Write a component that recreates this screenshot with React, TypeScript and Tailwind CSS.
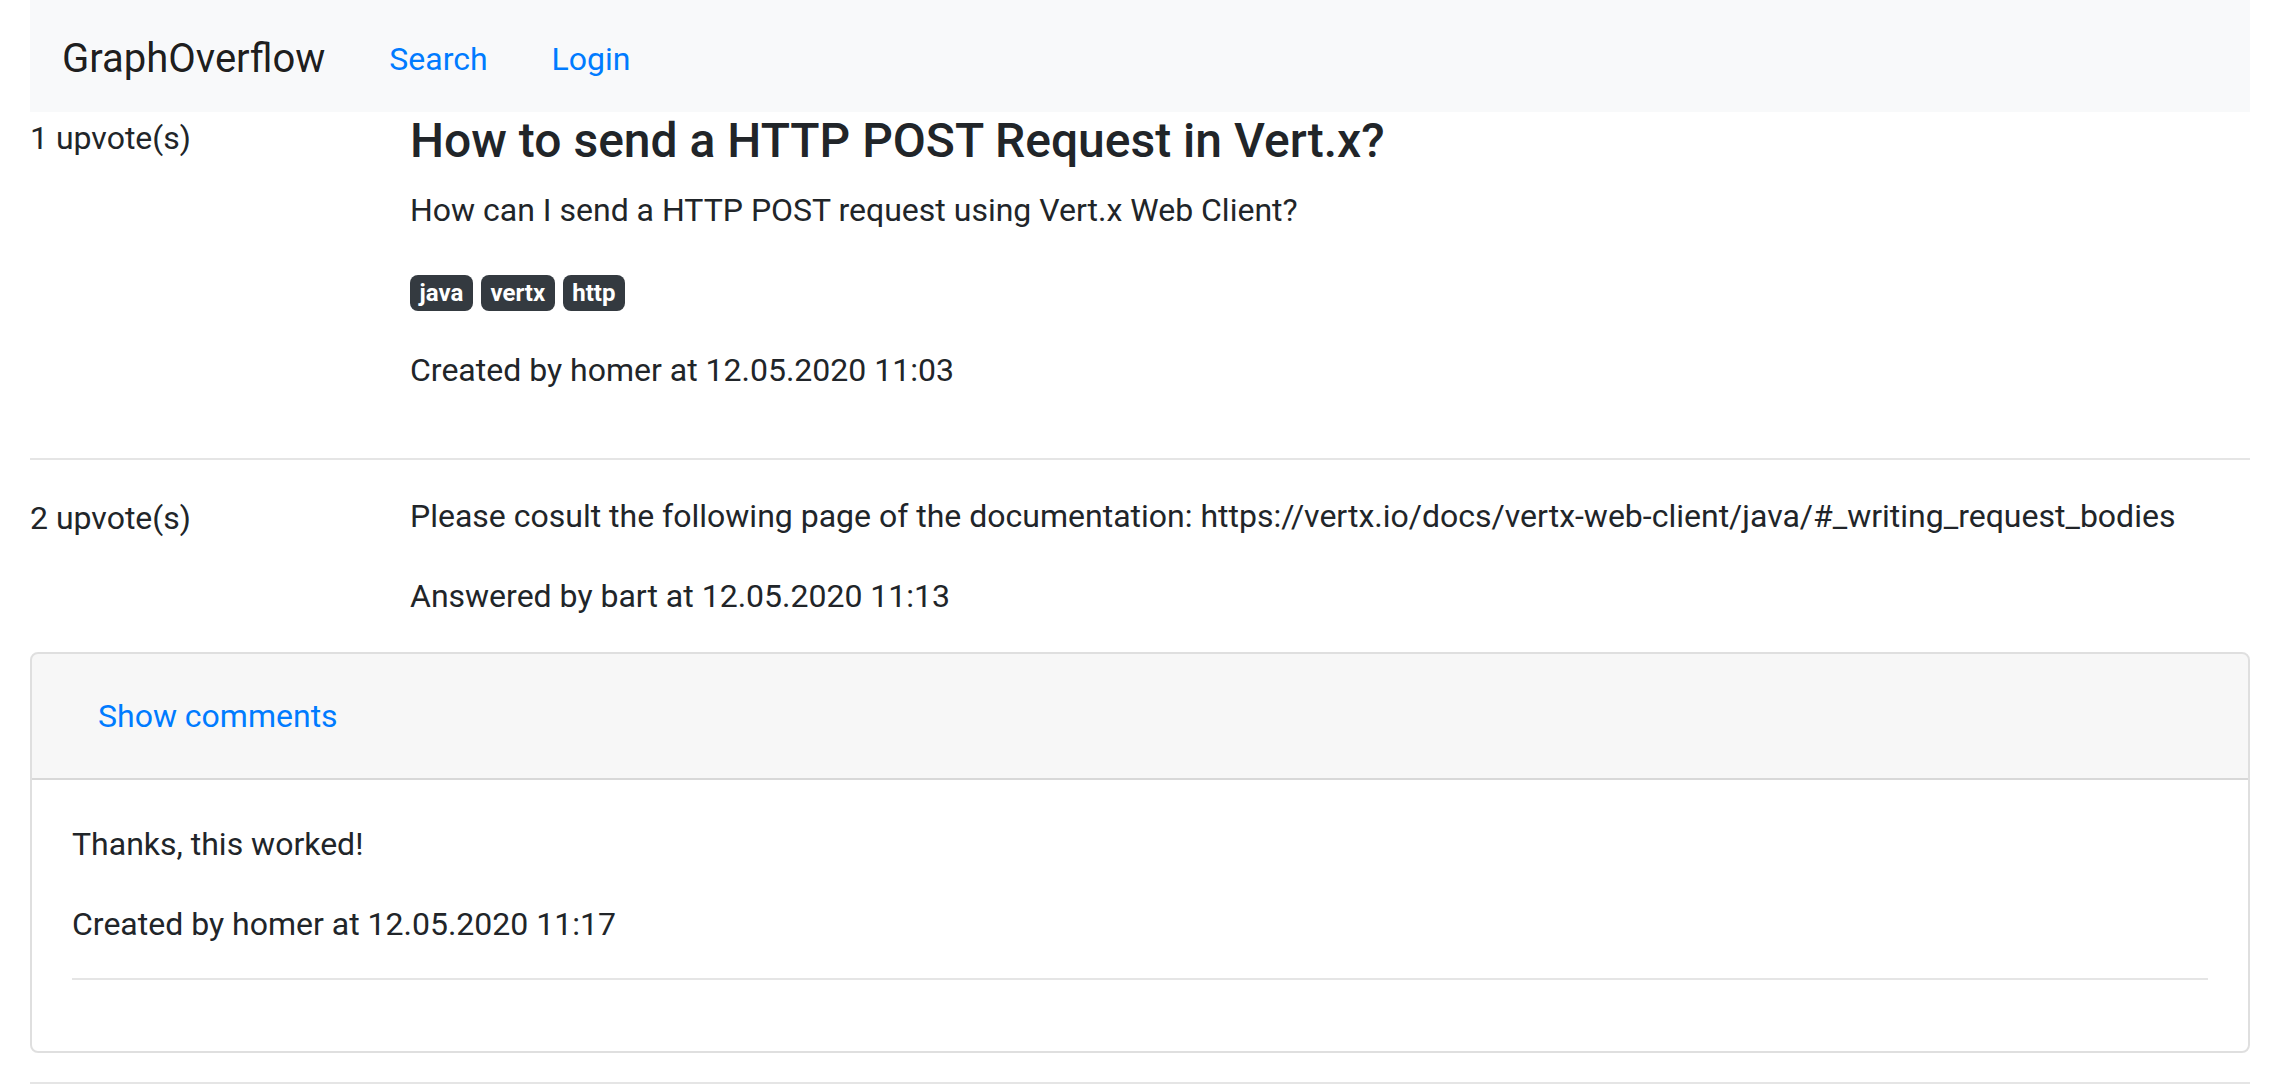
import React from 'react';

const Badge: React.FC<{ label: string }> = ({ label }) => (
  <span className="inline-block rounded-lg bg-[#343a40] px-[9.6px] py-[6px] text-[24px] font-bold leading-none text-white align-baseline">
    {label}
  </span>
);

const Row: React.FC<{ votes: number; children: React.ReactNode }> = ({
  votes,
  children,
}) => (
  <div className="-mx-[30px] flex">
    <div className="w-1/6 px-[30px] pt-[2px]">{votes} upvote(s)</div>
    <div className="w-5/6 px-[30px]">{children}</div>
  </div>
);

const App: React.FC = () => {
  return (
    <div className="min-h-screen bg-white px-[30px] font-['Roboto',sans-serif] text-[32px] leading-[1.5] text-[#212529]">
      {/* Navbar */}
      <nav className="flex items-center bg-[#f8f9fa] px-8 pt-[19px] pb-[13px]">
        <a href="#" className="mr-8 py-[10px] text-[40px] leading-[1.5] text-black/90">
          GraphOverflow
        </a>
        <ul className="flex">
          <li>
            <a href="#" className="block px-8 py-4 text-[#007bff]">
              Search
            </a>
          </li>
          <li>
            <a href="#" className="block px-8 py-4 text-[#007bff]">
              Login
            </a>
          </li>
        </ul>
      </nav>

      {/* Question */}
      <Row votes={1}>
        <h4 className="mb-4 text-[48px] font-medium leading-[1.2]">
          How to send a HTTP POST Request in Vert.x?
        </h4>
        <p className="mb-8">
          How can I send a HTTP POST request using Vert.x Web Client?
        </p>
        <p className="mb-8">
          <Badge label="java" /> <Badge label="vertx" /> <Badge label="http" />
        </p>
        <p className="mb-8">Created by homer at 12.05.2020 11:03</p>
      </Row>

      <hr className="my-8 border-t-2 border-black/10" />

      {/* Answer */}
      <Row votes={2}>
        <p className="mb-8">
          Please cosult the following page of the documentation:
          https://vertx.io/docs/vertx-web-client/java/#_writing_request_bodies
        </p>
        <p className="mb-8">Answered by bart at 12.05.2020 11:13</p>
      </Row>

      {/* Comments card */}
      <div className="rounded-lg border-2 border-black/[.125]">
        <div className="rounded-t-[6px] border-b-2 border-black/[.125] bg-black/[.03] px-10 py-6">
          <button className="border-2 border-transparent px-6 py-3 text-[32px] leading-[1.5] text-[#007bff]">
            Show comments
          </button>
        </div>
        <div className="p-10 pb-[39px]">
          <p className="mb-8">Thanks, this worked!</p>
          <p className="mb-[30px]">Created by homer at 12.05.2020 11:17</p>
          <hr className="mb-8 border-t-2 border-black/10" />
        </div>
      </div>

      <hr className="mt-[29px] mb-8 border-t-2 border-black/10" />
    </div>
  );
};

export default App;
